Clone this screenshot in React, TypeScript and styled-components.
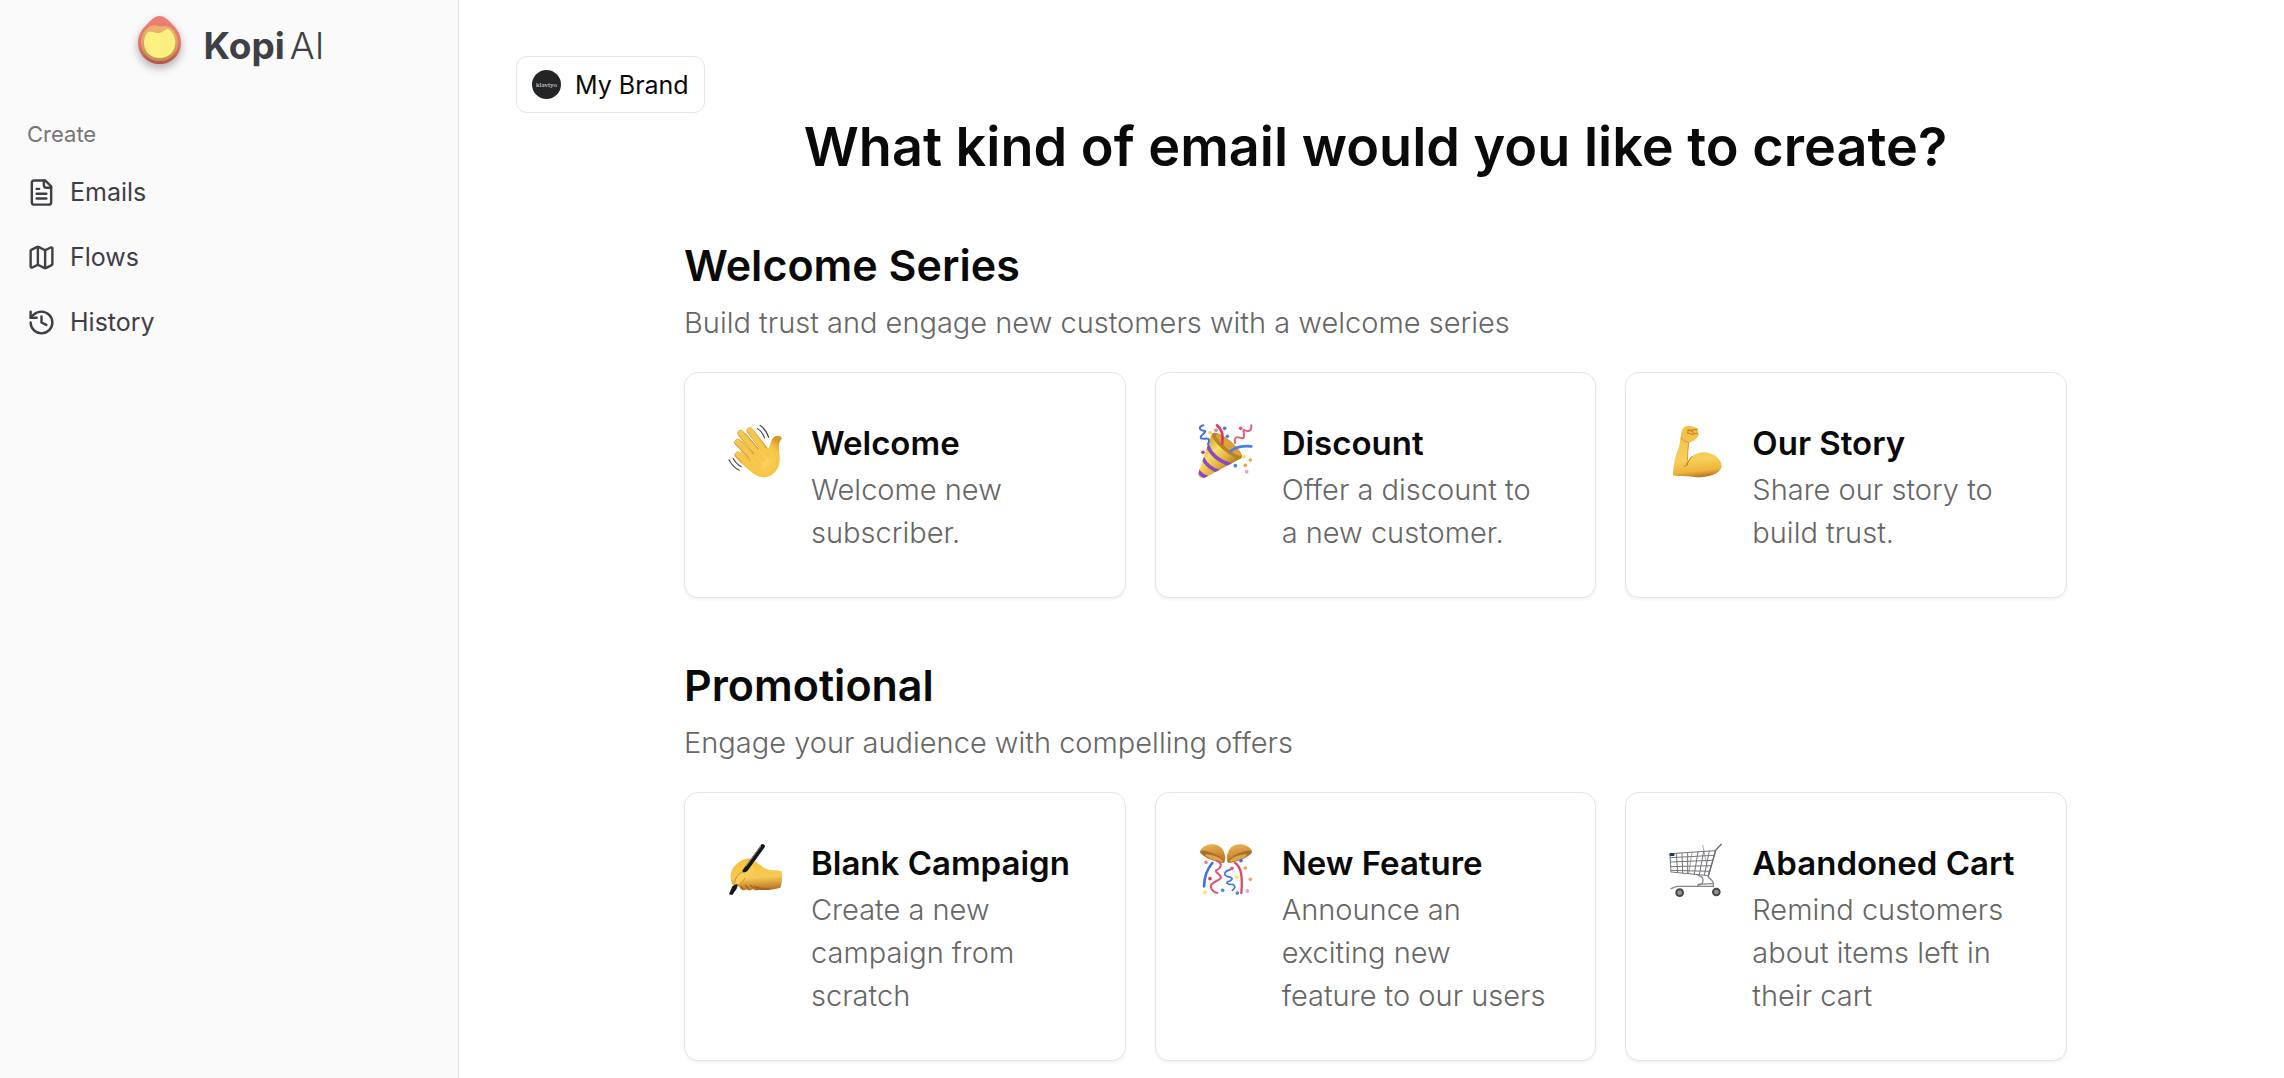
import React from "react";
import styled, { createGlobalStyle } from "styled-components";

const GlobalStyle = createGlobalStyle`
  *, *::before, *::after { box-sizing: border-box; }
  body {
    margin: 0;
    background: #ffffff;
    color: #0a0a0a;
    font-family: Inter, "Open Sans", sans-serif;
    -webkit-font-smoothing: antialiased;
  }
  h1, h2, h3, p, ul { margin: 0; padding: 0; }
`;

const Page = styled.div`
  display: flex;
  min-height: 100vh;
`;

const Sidebar = styled.aside`
  flex: 0 0 459px;
  padding: 16px 15px;
  background: #fafafa;
  border-right: 1px solid #e5e5e5;
  color: #3f3f46;
`;

const Logo = styled.a`
  display: flex;
  align-items: flex-end;
  justify-content: center;
  gap: 23px;
  margin-bottom: 41px;
  padding-left: 4px;
  color: inherit;
  text-decoration: none;
`;

const LogoMark = styled.svg`
  width: 43px;
  height: 48px;
  overflow: visible;
  filter: drop-shadow(0 4px 4px rgba(0, 0, 0, 0.3));
`;

const LogoText = styled.span`
  display: flex;
  gap: 5px;
  font-size: 37px;
  line-height: 36px;
  font-weight: 300;

  strong { font-weight: 700; }
`;

const NavLabel = styled.h2`
  padding: 0 12px;
  font-size: 22px;
  line-height: 58px;
  font-weight: 400;
  color: #76767a;
`;

const NavList = styled.ul`
  display: flex;
  flex-direction: column;
  gap: 7px;
  list-style: none;
`;

const NavLink = styled.a`
  display: flex;
  align-items: center;
  gap: 14px;
  height: 58px;
  padding: 0 12px;
  border-radius: 11px;
  font-size: 25px;
  color: inherit;
  text-decoration: none;

  svg {
    width: 29px;
    height: 29px;
    fill: none;
    stroke: currentColor;
    stroke-width: 2;
    stroke-linecap: round;
    stroke-linejoin: round;
  }
`;

const Main = styled.main`
  flex: 1;
  min-width: 0;
  padding: 56px 49px 16px 57px;
`;

const BrandButton = styled.button`
  display: flex;
  align-items: center;
  gap: 14px;
  height: 57px;
  padding: 0 15px;
  border: 1px solid #e5e5e5;
  border-radius: 11px;
  background: #ffffff;
  color: #0a0a0a;
  font: 400 25px Inter, sans-serif;
`;

const Avatar = styled.span`
  display: flex;
  align-items: center;
  justify-content: center;
  width: 29px;
  height: 29px;
  border-radius: 50%;
  background: #232426;
  color: #e5e5e5;
  font: 7px "Liberation Serif", serif;
`;

const Title = styled.h1`
  font-size: 54px;
  line-height: 68px;
  font-weight: 600;
  text-align: center;
`;

const Sections = styled.div`
  display: flex;
  flex-direction: column;
  gap: 58px;
  max-width: 1383px;
  margin: 55px auto 0;
`;

const SectionTitle = styled.h2`
  margin-bottom: 7px;
  font-size: 43px;
  line-height: 58px;
  font-weight: 600;
`;

const Description = styled.p`
  font-size: 29px;
  line-height: 43px;
  font-weight: 300;
  color: #666666;
`;

const CardGrid = styled.div`
  display: grid;
  grid-template-columns: repeat(3, minmax(0, 1fr));
  gap: 29px;
  margin-top: 28px;
`;

const Card = styled.article`
  display: flex;
  gap: 29px;
  padding: 45px 43px 43px;
  border: 1px solid #e5e5e5;
  border-radius: 14px;
  background: #ffffff;
  box-shadow: 0 2px 3px rgba(0, 0, 0, 0.05);
`;

const EmojiArt = styled.svg`
  flex: none;
  width: 54px;
  height: 54px;
  margin-top: 6px;
  overflow: visible;
  fill: none;
  stroke-linecap: round;
  stroke-linejoin: round;
`;

const CardTitle = styled.h3`
  font-size: 33px;
  line-height: 50px;
  font-weight: 600;
  white-space: nowrap;
`;

const CardBody = styled.div`
  min-width: 0;
`;

type Dot = [number, number, string];

const Dots = ({ items }: { items: Dot[] }) => (
  <>
    {items.map(([x, y, color]) => (
      <circle key={`${x}-${y}`} cx={x} cy={y} r="5.5" fill={color} />
    ))}
  </>
);

const WaveEmoji = () => (
  <EmojiArt viewBox="177 191 162 162" aria-hidden="true">
    <defs>
      <radialGradient id="wave-skin" cx="0.55" cy="0.6" r="0.6">
        <stop offset="0" stopColor="#fbd766" />
        <stop offset="0.7" stopColor="#f5c243" />
        <stop offset="1" stopColor="#dc962c" />
      </radialGradient>
    </defs>
    <g stroke="#d99a35" strokeWidth="20">
      <path d="M207 284 L258 326" />
      <path d="M206 246 L262 304" />
      <path d="M215 219 L272 285" />
      <path d="M243 211 L290 272" />
    </g>
    <path
      d="M244 290 L262 268 C278 268 288 266 300 263 C305 250 307 228 325 226 C338 226 341 234 335 240 C327 250 330 268 332 288 C335 324 314 350 285 351 C262 350 246 336 206 299 Z"
      fill="url(#wave-skin)"
    />
    <g stroke="#f6c74b" strokeWidth="16">
      <path d="M208 283 L268 330" />
      <path d="M206 245 L272 312" />
      <path d="M215 218 L282 298" />
      <path d="M243 210 L296 284" />
    </g>
    <g stroke="#d99a35" strokeWidth="3">
      <path d="M216 274 L244 301" />
      <path d="M219 243 L256 282" />
      <path d="M230 220 L270 266" />
    </g>
    <g stroke="#4c4c50" strokeWidth="3.5">
      <path d="M273 195 Q291 207 299 231" />
      <path d="M266 205 Q280 214 287 233" />
      <path d="M180 298 Q191 320 211 330" />
      <path d="M192 294 Q200 310 217 319" />
    </g>
  </EmojiArt>
);

const PartyEmoji = () => (
  <EmojiArt viewBox="179 192 162 162" aria-hidden="true">
    <defs>
      <linearGradient id="party-cone" x1="0" y1="0.2" x2="0.7" y2="0.9">
        <stop offset="0" stopColor="#c98a20" />
        <stop offset="0.4" stopColor="#f9de6a" />
        <stop offset="0.7" stopColor="#e3b23a" />
        <stop offset="1" stopColor="#9c6a1c" />
      </linearGradient>
      <clipPath id="party-clip">
        <path d="M218 220 L178 336 C174 350 184 356 196 353 L307 294 Z" />
      </clipPath>
    </defs>
    <path d="M218 220 L178 336 C174 350 184 356 196 353 L307 294 Z" fill="url(#party-cone)" />
    <g clipPath="url(#party-clip)" stroke="#8b46c9" strokeWidth="11">
      <path d="M203 254 Q222 300 274 314" />
      <path d="M190 294 Q205 324 238 334" />
      <path d="M174 328 Q182 346 204 352" />
    </g>
    <ellipse cx="263" cy="257" rx="57" ry="17" transform="rotate(40 263 257)" fill="#bd8228" />
    <ellipse cx="268" cy="255" rx="48" ry="11" transform="rotate(40 268 255)" fill="#dca53c" />
    <path d="M233 196 Q254 210 249 251" stroke="#e0375c" strokeWidth="8" />
    <path d="M273 274 Q295 256 336 259" stroke="#4a80e6" strokeWidth="8" />
    <path
      d="M192 196 C174 200 182 212 194 212 C208 215 178 226 185 235 C198 240 216 226 206 253"
      stroke="#3f74dc"
      strokeWidth="6"
    />
    <path
      d="M336 196 C338 212 328 218 315 210 C306 208 322 232 310 235 C298 232 284 224 287 249"
      stroke="#e36183"
      strokeWidth="6"
    />
    <Dots
      items={[
        [230, 211, "#ee7ba3"],
        [256, 205, "#4a80e6"],
        [212, 218, "#f7d94c"],
        [264, 229, "#4a80e6"],
        [304, 205, "#e0537a"],
        [191, 277, "#d8385a"],
        [314, 290, "#f9e04e"],
        [333, 300, "#f0a045"],
        [318, 316, "#f0a045"],
        [288, 317, "#4a80e6"],
        [322, 335, "#f09ac8"],
      ]}
    />
  </EmojiArt>
);

const MuscleEmoji = () => (
  <EmojiArt viewBox="178 191 162 162" aria-hidden="true">
    <defs>
      <linearGradient id="muscle-skin" x1="0.4" y1="0" x2="0.5" y2="1">
        <stop offset="0" stopColor="#f2bd42" />
        <stop offset="0.65" stopColor="#f8cf5a" />
        <stop offset="0.88" stopColor="#edb53b" />
        <stop offset="1" stopColor="#b97121" />
      </linearGradient>
    </defs>
    <path
      d="M190 345 C191 312 197 286 206 266 C214 246 211 216 221 203 C230 192 256 197 264 206 C268 212 262 217 268 222 C263 235 251 245 238 247 C233 265 236 290 232 314 C240 289 256 277 282 276 C314 277 337 298 336 320 C330 342 295 351 260 351 C235 346 215 351 190 345 Z"
      fill="url(#muscle-skin)"
    />
    <path d="M232 306 C235 315 229 318 225 317 M232 314 C235 304 239 296 246 289" stroke="#bd7726" strokeWidth="3" />
    <path d="M214 233 Q223 244 237 247 M237 248 Q234 275 233 302" stroke="#cb8a2c" strokeWidth="2.5" />
    <path d="M235 209 L246 210 L262 207 M236 209 L234 218 L248 222 L263 219 M244 213 L251 216" stroke="#a8691f" strokeWidth="2.5" />
  </EmojiArt>
);

const WritingEmoji = () => (
  <EmojiArt viewBox="177 191 162 162" aria-hidden="true">
    <defs>
      <linearGradient id="writing-skin" x1="0.4" y1="0" x2="0.5" y2="1">
        <stop offset="0" stopColor="#f4bf3d" />
        <stop offset="0.6" stopColor="#f8ca55" />
        <stop offset="1" stopColor="#b66f20" />
      </linearGradient>
    </defs>
    <path
      d="M187 306 C182 285 184 266 204 250 C216 239 237 230 250 237 C265 245 278 262 299 268 C315 271 330 268 338 273 C341 290 339 310 334 322 C313 328 290 331 270 328 C262 331 256 330 252 326 C246 331 238 332 233 327 C225 332 214 331 210 318 C200 318 190 317 187 306 Z"
      fill="url(#writing-skin)"
    />
    <path d="M190 344 L180 342 L190 318 L208 308 L203 325 Z" fill="#161616" />
    <path d="M281 198 L227 272" stroke="#161616" strokeWidth="13" />
    <path d="M275 198 L232 256" stroke="#909090" strokeWidth="3" />
    <path
      d="M198 303 C202 286 214 278 228 276 C240 272 247 266 252 258 C261 266 253 284 239 291 C224 295 220 309 208 313 C201 314 197 309 198 303 Z"
      fill="#f9cd58"
    />
    <path d="M197 306 Q201 283 218 276 M208 313 Q222 304 229 293" stroke="#c98529" strokeWidth="2.5" />
    <path d="M216 317 L220 325 M230 314 L237 325 M244 314 L254 324" stroke="#8d5016" strokeWidth="3" />
    <path d="M252 315 Q280 326 310 322 L296 328 L262 328 Z" fill="#a9631f" />
  </EmojiArt>
);

const BallEmoji = () => (
  <EmojiArt viewBox="178 191 162 162" aria-hidden="true">
    <defs>
      <linearGradient id="ball-gold" x1="0" y1="0" x2="0.3" y2="1">
        <stop offset="0" stopColor="#f0b55c" />
        <stop offset="1" stopColor="#c17c26" />
      </linearGradient>
    </defs>
    <path d="M181 212 C194 188 228 186 245 202 C256 214 260 236 254 243 Z" fill="url(#ball-gold)" />
    <path d="M337 212 C324 188 290 186 273 202 C262 214 258 236 264 243 Z" fill="url(#ball-gold)" />
    <ellipse cx="218" cy="229" rx="40" ry="10" transform="rotate(23 218 229)" fill="#a87029" />
    <ellipse cx="300" cy="229" rx="40" ry="10" transform="rotate(-23 300 229)" fill="#a87029" />
    <ellipse cx="223" cy="233" rx="28" ry="6" transform="rotate(20 223 233)" fill="#dda64c" />
    <ellipse cx="295" cy="233" rx="28" ry="6" transform="rotate(-20 295 233)" fill="#dda64c" />
    <path d="M218 248 Q194 276 193 318" stroke="#3a70f0" strokeWidth="8" />
    <path d="M286 248 Q312 262 305 338" stroke="#dd4a66" strokeWidth="7" />
    <path
      d="M232 242 C252 250 242 264 230 270 C222 276 248 282 243 294 C232 304 214 306 213 319 Q216 333 233 338"
      stroke="#e0537a"
      strokeWidth="6"
    />
    <path
      d="M272 268 C254 272 250 284 262 288 C276 291 284 294 270 302 C252 308 267 314 280 312 Q292 320 278 330"
      stroke="#416fe0"
      strokeWidth="5"
    />
    <Dots
      items={[
        [199, 246, "#ee7ba3"],
        [304, 241, "#4a70e8"],
        [317, 263, "#f0a045"],
        [277, 264, "#e0537a"],
        [211, 295, "#e0375c"],
        [291, 291, "#f7e84e"],
        [332, 297, "#f0a060"],
        [196, 336, "#f7e84e"],
        [249, 330, "#4f86e6"],
        [293, 338, "#4f86e6"],
        [323, 332, "#f09ac8"],
      ]}
    />
  </EmojiArt>
);

const CartEmoji = () => (
  <EmojiArt viewBox="178 191 162 162" aria-hidden="true">
    <g stroke="#77757a" strokeWidth="3">
      <path d="M182 220 L317 211 L297 286 L185 275 Z" />
      <path d="M182 232 L313 225 M183 245 L309 240 M184 259 L304 256 M185 270 L300 273" />
      <path d="M200 220 L204 276 M217 218 L219 278 M234 217 L234 280 M265 214 L254 281 M282 213 L269 283 M299 212 L284 284" />
      <path d="M247 216 L237 280 M279 195 L284 218 L293 262" strokeWidth="2" />
    </g>
    <path d="M335 192 L319 208 L296 286" stroke="#6c6a6e" strokeWidth="4" />
    <path d="M265 286 Q286 288 278 309 L264 316 M295 285 C296 295 310 298 311 308 L311 319" stroke="#88868a" strokeWidth="4" />
    <path d="M184 325 L202 318 L311 318 M265 312 L308 310" stroke="#88868a" strokeWidth="4" />
    <rect x="180" y="218" width="14" height="9" fill="#23395a" />
    <circle cx="210" cy="337" r="10" fill="#9b9292" stroke="#4a4545" strokeWidth="6" />
    <circle cx="320" cy="335" r="10" fill="#9b9292" stroke="#4a4545" strokeWidth="6" />
  </EmojiArt>
);

const navItems = [
  {
    label: "Emails",
    icon: (
      <>
        <path d="M15 2H6a2 2 0 0 0-2 2v16a2 2 0 0 0 2 2h12a2 2 0 0 0 2-2V7Z" />
        <path d="M14 2v4a2 2 0 0 0 2 2h4" />
        <path d="M10 9H8" />
        <path d="M16 13H8" />
        <path d="M16 17H8" />
      </>
    ),
  },
  {
    label: "Flows",
    icon: (
      <>
        <path d="M14.106 5.553a2 2 0 0 0 1.788 0l3.659-1.83A1 1 0 0 1 21 4.619v12.764a1 1 0 0 1-.553.894l-4.553 2.277a2 2 0 0 1-1.788 0l-4.212-2.106a2 2 0 0 0-1.788 0l-3.659 1.83A1 1 0 0 1 3 19.381V6.618a1 1 0 0 1 .553-.894l4.553-2.277a2 2 0 0 1 1.788 0z" />
        <path d="M15 5.764v15" />
        <path d="M9 3.236v15" />
      </>
    ),
  },
  {
    label: "History",
    icon: (
      <>
        <path d="M3 12a9 9 0 1 0 9-9 9.75 9.75 0 0 0-6.74 2.74L3 8" />
        <path d="M3 3v5h5" />
        <path d="M12 7v5l4 2" />
      </>
    ),
  },
];

const sections = [
  {
    title: "Welcome Series",
    description: "Build trust and engage new customers with a welcome series",
    cards: [
      { Emoji: WaveEmoji, title: "Welcome", text: "Welcome new subscriber." },
      { Emoji: PartyEmoji, title: "Discount", text: "Offer a discount to a new customer." },
      { Emoji: MuscleEmoji, title: "Our Story", text: "Share our story to build trust." },
    ],
  },
  {
    title: "Promotional",
    description: "Engage your audience with compelling offers",
    cards: [
      { Emoji: WritingEmoji, title: "Blank Campaign", text: "Create a new campaign from scratch" },
      { Emoji: BallEmoji, title: "New Feature", text: "Announce an exciting new feature to our users" },
      { Emoji: CartEmoji, title: "Abandoned Cart", text: "Remind customers about items left in their cart" },
    ],
  },
];

export default function App() {
  return (
    <>
      <GlobalStyle />
      <Page>
        <Sidebar>
          <Logo href="#">
            <LogoMark viewBox="60 48 129 144" aria-hidden="true">
              <defs>
                <linearGradient id="drop-red" x1="0" y1="0" x2="0" y2="1">
                  <stop offset="0" stopColor="#ef8076" />
                  <stop offset="0.6" stopColor="#e5736a" />
                  <stop offset="1" stopColor="#b4534c" />
                </linearGradient>
                <linearGradient id="drop-orange" x1="0" y1="0" x2="0" y2="1">
                  <stop offset="0" stopColor="#f2b470" />
                  <stop offset="1" stopColor="#bd944e" />
                </linearGradient>
              </defs>
              <path
                d="M125 48 C138 48 149 58 160 70 C178 87 189 104 189 128 C189 164 160 192 125 192 C90 192 60 164 60 128 C60 104 72 87 90 70 C101 58 112 48 125 48 Z"
                fill="url(#drop-red)"
              />
              <path
                d="M93 82 C104 73 114 76 124 79 C136 80 144 77 155 81 C171 92 180 108 180 129 C180 160 155 183 125 183 C94 183 69 160 69 129 C69 110 78 92 93 82 Z"
                fill="url(#drop-orange)"
              />
              <path
                d="M90 96 C100 93 108 97 118 99 C134 100 138 89 150 87 C164 95 172 110 172 128 C172 154 151 174 125 174 C98 174 78 154 78 128 C78 115 82 104 90 96 Z"
                fill="#fdf082"
              />
            </LogoMark>
            <LogoText>
              <strong>Kopi</strong>
              <span>AI</span>
            </LogoText>
          </Logo>
          <nav aria-labelledby="create-label">
            <NavLabel id="create-label">Create</NavLabel>
            <NavList>
              {navItems.map(({ label, icon }) => (
                <li key={label}>
                  <NavLink href="#">
                    <svg viewBox="0 0 24 24" aria-hidden="true">
                      {icon}
                    </svg>
                    {label}
                  </NavLink>
                </li>
              ))}
            </NavList>
          </nav>
        </Sidebar>
        <Main>
          <BrandButton type="button">
            <Avatar>klaviyo</Avatar>
            My Brand
          </BrandButton>
          <Title>What kind of email would you like to create?</Title>
          <Sections>
            {sections.map((section) => (
              <section key={section.title}>
                <SectionTitle>{section.title}</SectionTitle>
                <Description>{section.description}</Description>
                <CardGrid>
                  {section.cards.map(({ Emoji, title, text }) => (
                    <Card key={title}>
                      <Emoji />
                      <CardBody>
                        <CardTitle>{title}</CardTitle>
                        <Description>{text}</Description>
                      </CardBody>
                    </Card>
                  ))}
                </CardGrid>
              </section>
            ))}
          </Sections>
        </Main>
      </Page>
    </>
  );
}
